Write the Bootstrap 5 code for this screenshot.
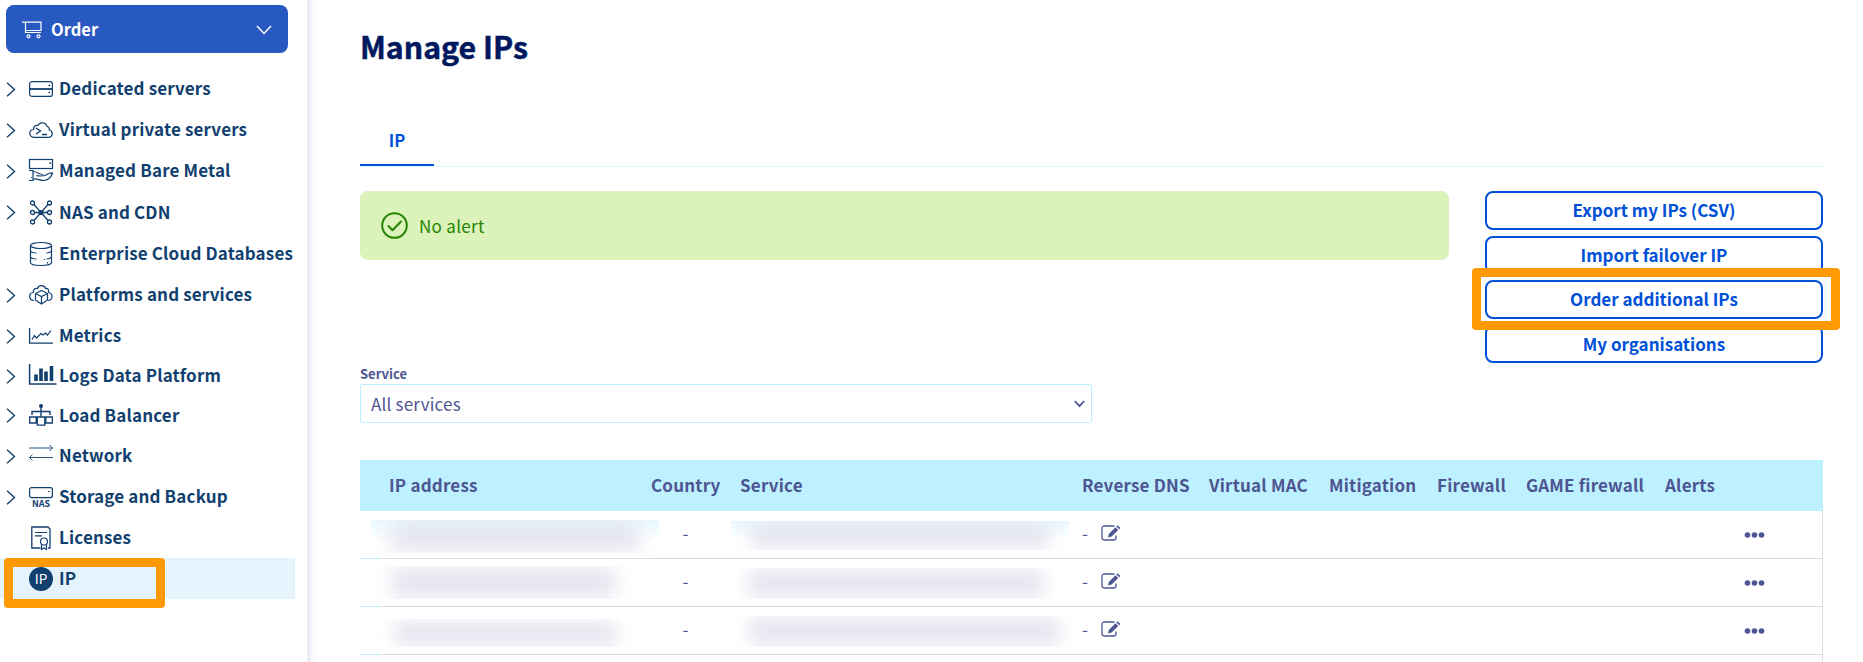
<!DOCTYPE html>
<html lang="en">
<head>
<meta charset="utf-8">
<title>Manage IPs</title>
<link href="https://cdn.jsdelivr.net/npm/bootstrap@5.3.0/dist/css/bootstrap.min.css" rel="stylesheet">
<style>
body{font-family:"Noto Sans CJK SC","Source Sans Pro",sans-serif;font-size:17px;line-height:24px;color:#4d5592;height:662px;overflow:hidden;background:#fff}
svg{display:block;flex:none;fill:none;stroke:currentColor}
.side{width:307px;flex:none;color:#113f6f;padding-top:5px}
.edge{width:10px;flex:none;background:linear-gradient(90deg,#e8e8f6 0,#ededf9 25%,#fafaff 55%,#fff 100%)}
.btn-order{width:282px;height:48px;margin:0 0 15px 6px;padding:1px 16px 0;border-radius:8px;background:#2859c0;color:#fff;font-size:16.500px;font-weight:700}
.btn-order:hover{background:#2859c0;color:#fff}
.btn-order span{margin-left:8px}
.side-row{height:41px;width:295px;padding-left:6px;font-weight:700;position:relative;white-space:nowrap}
.side-row .chev{width:23px;flex:none;padding-top:1px}
.side-row .ico{width:30px;flex:none}
.side-row .side-txt{letter-spacing:.15px;padding-bottom:1px}
.side-row.short{height:39.5px}
.side-row.tall{height:42px}
.side-row.current{background:#e5f4fc}
.mark-box{position:absolute;border:9px solid #ff9a06;border-radius:4px;z-index:2;pointer-events:none}
.mark-ip{left:4px;top:0;width:161px;height:50px}
.mark-order{left:-13px;right:-17px;top:-12px;height:62px}
.main-col{padding:0 40px 0 43px;min-width:0}
.title{font-size:30.300px;line-height:40px;font-weight:700;color:#00185e;margin:26px 0 50px;-webkit-text-stroke:.5px #00185e}
.tabs{height:51px;border-bottom:1px solid #dff8fe;color:#0050d7;font-weight:700}
.tabs .nav-link{width:74px;height:50px;border-bottom:2px solid #0050d7;padding:0;text-align:center;line-height:49px;font-size:16.500px;color:#0050d7}
.top-band{margin-top:24px;height:174px}
.okbox{width:1089px;height:69px;border:0;border-radius:8px;background:#dbf2ba;color:#268403;padding:0 0 0 21px;margin:0}
.okbox span{margin-left:11px;letter-spacing:.3px}
.acts{width:338px;gap:6px}
.btn-line{height:38.500px;border:2px solid #0050d7;border-radius:8px;color:#0050d7;font-size:17px;font-weight:700;padding:0;line-height:32px;background:#fff;width:100%}
.lab{font-size:13px;line-height:18px;font-weight:700;color:#4d5592;margin:0 0 1px}
.sel{width:732px;height:39px;border:1px solid #bef1ff;border-radius:2px;padding:0 6px 0 10px}
.sel span{letter-spacing:.2px}
.grid-tb{table-layout:fixed;width:1463px;border-collapse:separate;border-spacing:0;margin-top:37px}
.grid-tb th{height:51px;padding:0 0 2px 10px;background:#bef1ff;font-weight:700;white-space:nowrap;vertical-align:middle;letter-spacing:.2px}
.grid-tb th:first-child{padding-left:29px}
.grid-tb td{height:48px;padding:0 0 0 10px;border-bottom:1px solid #dcdcdc;vertical-align:middle}
.grid-tb td:first-child{border-bottom-color:transparent;background:linear-gradient(90deg,#bef1ff 20px,#dcdcdc 20px) 0 100%/100% 1px no-repeat border-box}
.grid-tb td:last-child{border-right:1px solid #dcdcdc}
.grid-tb td.dash{padding:0 0 3px}
.grid-tb td.rev{padding-bottom:3px}
.grid-tb .tail td{height:6px;border-bottom:0;background:none}
.rev svg{margin:0 0 0 13px}
.veil{overflow:hidden;padding:2px 20px}
.veil i{display:block;height:100%;background:#e4e5ef;filter:blur(9px)}
.veil.tinted{background:linear-gradient(#e8f8fe,#fff 65%)}
</style>
</head>
<body>
<div class="d-flex h-100">
<aside class="side">
  <button class="btn btn-order d-flex align-items-center border-0">
    <svg width="21" height="18" viewBox="0 0 21 18" stroke-width="1.200"><path d="M0 1.200h3.500V11.500H19M3 1.200h16v8.300H3.500"/><circle cx="6.500" cy="15.300" r="1.500"/><circle cx="16.500" cy="15.300" r="1.500"/></svg>
    <span>Order</span>
    <svg class="ms-auto" width="16" height="10" viewBox="0 0 16 10" stroke-width="1.500"><path d="M1 1l7 7.500L15 1"/></svg>
  </button>
  <nav id="menu"></nav>
</aside>
<div class="edge"></div>
<main class="main-col flex-grow-1">
  <h1 class="title">Manage IPs</h1>
  <div class="tabs"><a class="nav-link">IP</a></div>
  <div class="top-band d-flex justify-content-between">
    <div class="okbox alert d-flex align-items-center">
      <svg width="27" height="27" viewBox="0 0 27 27" stroke-width="2"><circle cx="13.500" cy="13.500" r="12.300"/><path d="M7.500 14l4 4.200 8.500-8.700" stroke-linecap="round" stroke-linejoin="round"/></svg>
      <span>No alert</span>
    </div>
    <div class="acts d-flex flex-column">
      <button class="btn btn-line">Export my IPs (CSV)</button>
      <button class="btn btn-line">Import failover IP</button>
      <div class="position-relative"><button class="btn btn-line d-block">Order additional IPs</button><span class="mark-box mark-order"></span></div>
      <button class="btn btn-line">My organisations</button>
    </div>
  </div>
  <label class="lab d-block">Service</label>
  <div class="sel d-flex align-items-center justify-content-between">
    <span>All services</span>
    <svg width="11" height="8" viewBox="0 0 11 8" stroke-width="1.800"><path d="M.8 1l4.700 5.200L10.200 1"/></svg>
  </div>
  <table class="grid-tb">
    <colgroup><col style="width:281px"><col style="width:89px"><col style="width:342px"><col style="width:127px"><col style="width:120px"><col style="width:108px"><col style="width:89px"><col style="width:139px"><col style="width:79px"><col style="width:89px"></colgroup>
    <thead><tr><th>IP address</th><th>Country</th><th>Service</th><th>Reverse DNS</th><th>Virtual MAC</th><th>Mitigation</th><th>Firewall</th><th>GAME firewall</th><th>Alerts</th><th></th></tr></thead>
    <tbody id="rows"></tbody>
  </table>
</main>
</div>
<script>
// [label, row kind (0 leaf, 1 expandable, 2 expandable and short), icon height, icon]
const items = [
 ["Dedicated servers",1,16,'<rect x=".6" y=".6" width="22.800" height="14.800" rx="2.500"/><path d="M1 8h22" stroke-width="1.800"/><path d="M19.500 4.500h1.500M19.500 11.500h1.500" stroke-width="1.500"/>'],
 ["Virtual private servers",1,16,'<path d="M4.500 15.300C-.5 14.500-.5 8 4.500 7.500 4.500 4 7 3 9 3.500c2-4 8-3.500 9 1 2 .3 2.500 2 2.300 3.500 4 .8 4 6.500-.3 7.300z"/><path d="M7 6l4.500 3L7 12M13 12.500h5" stroke-width="1.400"/>'],
 ["Managed Bare Metal",1,23,'<rect x=".5" y=".5" width="23" height="9"/><path d="M20 4h1.500v1M0 11.500h4v10H0M2 18.500h1M4 12.500c4 0 5 2 7.500 2.500 3 .5 3.500 2 0 2-2 0-3 0-4-.5M14.500 17c3.500-1 5-3.500 9-3-1 4-4.500 7.500-9 7.500s-5.500-2-10-1.500"/>'],
 ["NAS and CDN",1,25,'<g stroke-width="1.300"><path d="M5 4.500l14 16M19 4.500l-14 16M5.500 12.500h13"/><circle cx="3.500" cy="3" r="2"/><circle cx="20.500" cy="3" r="2"/><circle cx="3.500" cy="12.500" r="2"/><circle cx="20.500" cy="12.500" r="2"/><circle cx="3.500" cy="22" r="2"/><circle cx="20.500" cy="22" r="2"/></g><circle cx="12" cy="12.500" r="2" fill="currentColor"/>'],
 ["Enterprise Cloud Databases",0,24,'<ellipse cx="12" cy="3.500" rx="10.500" ry="3"/><path d="M1.500 3.500v17c0 4 21 4 21 0v-17M1.500 9c1 1.500 4 2 6 2M22.500 9c-1 1.500-3 2-5 2M1.500 15c1 1.500 4 2 6 2M22.500 15c-1 1.500-3 2-5 2"/><path d="M15.500 17v1M18.500 20v1.500"/>'],
 ["Platforms and services",1,20,'<path d="M5 15.500C-1 15-.5 8 4.300 7.500 4 4 6.500 3 8.500 3.500c1.500-4 7-3.500 8 0 2.500-.3 3.500 1.500 3.200 4 4.500 1 4.500 7.500-.7 8"/><path d="M12.500 5.500l6 3v6.500l-6 4-6-4V8.500zM6.500 8.500l6 3 6-3M12.500 11.500v7.500"/>'],
 ["Metrics",1,16,'<path d="M.6 0v15.200H24" stroke-width="1.300"/><path d="M3 11.500l2.500-4 2 2.500 4.500-4.500 2 1.500 2.500-2 2 2 3.500-4.500"/>'],
 ["Logs Data Platform",2,24,'<path d="M.6 0v20H27.500" stroke-width="1.500"/><path d="M7 17V10.500M12 17V4.500M17 17V7.500M22.500 17V2" stroke-width="3.600"/>'],
 ["Load Balancer",2,22,'<circle cx="12" cy="2" r="2" fill="currentColor" stroke="none"/><path d="M12 2v11M3 11V7.500h18V11" stroke-width="1.400"/><path d="M.7 13h6.500v6H.7zM16.800 13h6.500v6h-6.500zM8.300 13h7.500v8.200H8.300z" stroke-width="1.300"/>'],
 ["Network",1,23,'<path d="M0 4h23.500M20.500 1l3 3-3 3M24 13.500H.5M3.500 10.500l-3 3 3 3" stroke-width=".9"/>'],
 ["Storage and Backup",1,20,'<rect x=".6" y=".6" width="22.800" height="10" rx="2"/><path d="M19 4.500h1.500"/><text x="12" y="20" text-anchor="middle" font-size="9" font-weight="700" fill="currentColor" stroke="none">NAS</text>'],
 ["Licenses",0,24,'<path d="M11.500 22H2.800V1H19l2 2v19h-2" stroke-width="1.300"/><path d="M6 6.500h12M6 9.800h7"/><circle cx="15" cy="15.500" r="3.500"/><path d="M12.500 18.500v5l2.500-1.500 2.500 1.500v-5"/>'],
 ["IP",0,24,'<circle cx="12" cy="12" r="12" fill="currentColor" stroke="none"/><text x="12" y="17" text-anchor="middle" font-size="13.500" fill="#fff" stroke="none" font-weight="400">IP</text>']
];
const extra = {"NAS and CDN":" tall","IP":" current"};
document.getElementById("menu").innerHTML = items.map(([t,c,h,s]) => `<div class="side-row d-flex align-items-center${c==2?" short":""}${extra[t]||""}"><span class="chev">${c?'<svg width="10" height="15" viewBox="0 0 10 15" stroke-width="1.400"><path d="M1 .8l7.500 6.700L1 14.200"/></svg>':""}</span><span class="ico"><svg width="24" height="${h}" viewBox="0 0 24 ${h}" overflow="visible" stroke-width="1.200">${s}</svg></span><span class="side-txt">${t}</span>${t=="IP"?'<span class="mark-box mark-ip"></span>':""}</div>`).join("");
// redacted spans per row: [left margin, top margin, width, height]
const veils = [
 [[11,9,288,33],[-9,10,338,29]],
 [[12,7,263,33],[-12,9,336,31]],
 [[15,12,261,28],[-10,9,349,31]]
];
const veil = ([x,y,w,h],k) => `<div class="veil${k?" tinted":""}" style="margin-left:${x}px;margin-top:${y}px;width:${w}px;height:${h}px"><i></i></div>`;
document.getElementById("rows").innerHTML = veils.map((v,n) => `<tr><td class="align-top p-0">${veil(v[0],n==0)}</td><td class="dash text-center">-</td><td class="align-top">${veil(v[1],n==0)}</td><td class="rev"><div class="d-flex align-items-center">-<svg width="20" height="16" viewBox="0 0 20 16" stroke-width="1.300"><path d="M13.500 1H3.500Q1 1 1 3.500v9Q1 15 3.500 15h9q2.500 0 2.500-2.500V10.500"/><path d="M7 12.500l.8-3.600L14.500 2.200l2.700 2.700-6.600 6.700zM15.300 1.400l1.200-1.200 2.900 2.900-1.200 1.200z" fill="currentColor" stroke="none"/></svg></div></td><td></td><td></td><td></td><td></td><td></td><td><svg width="21" height="6" viewBox="0 0 21 6"><g fill="currentColor" stroke="none"><circle cx="3.500" cy="3" r="2.800"/><circle cx="10.500" cy="3" r="2.800"/><circle cx="17.500" cy="3" r="2.800"/></g></svg></td></tr>`).join("") + '<tr class="tail">'+"<td></td>".repeat(10)+"</tr>";
</script>
<script src="https://cdn.jsdelivr.net/npm/bootstrap@5.3.0/dist/js/bootstrap.bundle.min.js"></script>
</body>
</html>
